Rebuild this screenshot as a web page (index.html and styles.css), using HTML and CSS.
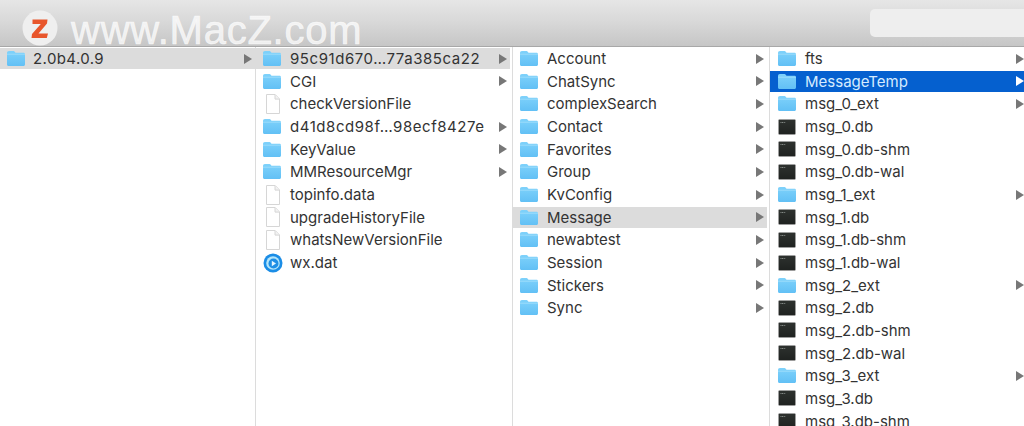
FILE: index.html
```html
<!DOCTYPE html>
<html lang="en">
<head>
<meta charset="utf-8">
<title>Finder</title>
<link rel="stylesheet" href="styles.css">
</head>
<body>
<svg class="defs" width="0" height="0" aria-hidden="true">
  <defs>
    <linearGradient id="fg" x1="0" y1="0" x2="0" y2="1"><stop offset="0" stop-color="#7fd2fb"/><stop offset="1" stop-color="#62c0f5"/></linearGradient>
    <linearGradient id="tg" x1="0" y1="0" x2="0" y2="1"><stop offset="0" stop-color="#2e322f"/><stop offset="1" stop-color="#1f2220"/></linearGradient>
    <symbol id="folder" viewBox="0 0 20 17">
      <path d="M1 3.200C1 1.900 1.700 1 2.900 1h4.200c.9 0 1.300.3 1.800.9l.6.8H17.400c1 0 1.600.7 1.600 1.700v9.800c0 1-.6 1.800-1.600 1.800H2.600C1.600 16 1 15.200 1 14.200z" fill="url(#fg)"/>
      <path d="M1 4.200h18" stroke="#a7e0fb" stroke-width=".8" fill="none"/>
    </symbol>
    <symbol id="doc" viewBox="0 0 16 20">
      <path d="M1.500.5h8.700l4.300 4.400v14.600h-13z" fill="#fff" stroke="#d6d6d6"/>
      <path d="M10 .8v4.300h4.300" fill="#f2f2f2" stroke="#d6d6d6"/>
    </symbol>
    <symbol id="term" viewBox="0 0 18 16">
      <rect x=".5" y=".5" width="17" height="15" rx="1" fill="url(#tg)" stroke="#a5a5a5" stroke-width=".6"/>
      <path d="M2.500 3.500h5" stroke="#8d938f" stroke-width="1" stroke-dasharray="1 .6"/>
    </symbol>
    <symbol id="wx" viewBox="0 0 20 20">
      <circle cx="10" cy="10" r="9.500" fill="#1b8de6"/>
      <circle cx="10" cy="10" r="6.800" fill="#b4e6fa"/>
      <circle cx="10.500" cy="10.500" r="5" fill="#1f8fe6"/>
      <path d="M8.800 7.800l4.200 2.700-4.200 2.700z" fill="#e6f7ff"/>
    </symbol>
    <symbol id="arrow" viewBox="0 0 8 10"><path d="M0 0l8 5-8 5z"/></symbol>
  </defs>
</svg>
<div class="window">
  <header class="toolbar">
    <svg class="logo" viewBox="0 0 36 36" aria-hidden="true">
      <circle cx="18" cy="18" r="17.500" fill="#efefef"/>
      <path d="M10.500 9.500H25.500L25 13.500 16.500 23.500H26L24.800 28H9.500L10 24 18.800 14H10.500z" fill="#e8562c"/>
    </svg>
    <span class="watermark">www.MacZ.com</span>
    <div class="search"></div>
  </header>
  <main class="browser">
    <section class="col col-1">
      <div class="row path"><svg class="ic folder"><use href="#folder"/></svg><span class="name num">2.0b4.0.9</span><svg class="chev"><use href="#arrow"/></svg></div>
    </section>
    <section class="col col-2">
      <div class="row path"><svg class="ic folder"><use href="#folder"/></svg><span class="name hash">95c91d670…77a385ca22</span><svg class="chev"><use href="#arrow"/></svg></div>
      <div class="row"><svg class="ic folder"><use href="#folder"/></svg><span class="name">CGI</span><svg class="chev"><use href="#arrow"/></svg></div>
      <div class="row"><svg class="ic doc"><use href="#doc"/></svg><span class="name">checkVersionFile</span></div>
      <div class="row"><svg class="ic folder"><use href="#folder"/></svg><span class="name hash">d41d8cd98f…98ecf8427e</span><svg class="chev"><use href="#arrow"/></svg></div>
      <div class="row"><svg class="ic folder"><use href="#folder"/></svg><span class="name">KeyValue</span><svg class="chev"><use href="#arrow"/></svg></div>
      <div class="row"><svg class="ic folder"><use href="#folder"/></svg><span class="name">MMResourceMgr</span><svg class="chev"><use href="#arrow"/></svg></div>
      <div class="row"><svg class="ic doc"><use href="#doc"/></svg><span class="name">topinfo.data</span></div>
      <div class="row"><svg class="ic doc"><use href="#doc"/></svg><span class="name">upgradeHistoryFile</span></div>
      <div class="row"><svg class="ic doc"><use href="#doc"/></svg><span class="name">whatsNewVersionFile</span></div>
      <div class="row"><svg class="ic wx"><use href="#wx"/></svg><span class="name">wx.dat</span></div>
    </section>
    <section class="col col-3">
      <div class="row"><svg class="ic folder"><use href="#folder"/></svg><span class="name">Account</span><svg class="chev"><use href="#arrow"/></svg></div>
      <div class="row"><svg class="ic folder"><use href="#folder"/></svg><span class="name">ChatSync</span><svg class="chev"><use href="#arrow"/></svg></div>
      <div class="row"><svg class="ic folder"><use href="#folder"/></svg><span class="name">complexSearch</span><svg class="chev"><use href="#arrow"/></svg></div>
      <div class="row"><svg class="ic folder"><use href="#folder"/></svg><span class="name">Contact</span><svg class="chev"><use href="#arrow"/></svg></div>
      <div class="row"><svg class="ic folder"><use href="#folder"/></svg><span class="name">Favorites</span><svg class="chev"><use href="#arrow"/></svg></div>
      <div class="row"><svg class="ic folder"><use href="#folder"/></svg><span class="name">Group</span><svg class="chev"><use href="#arrow"/></svg></div>
      <div class="row"><svg class="ic folder"><use href="#folder"/></svg><span class="name">KvConfig</span><svg class="chev"><use href="#arrow"/></svg></div>
      <div class="row path"><svg class="ic folder"><use href="#folder"/></svg><span class="name">Message</span><svg class="chev"><use href="#arrow"/></svg></div>
      <div class="row"><svg class="ic folder"><use href="#folder"/></svg><span class="name">newabtest</span><svg class="chev"><use href="#arrow"/></svg></div>
      <div class="row"><svg class="ic folder"><use href="#folder"/></svg><span class="name">Session</span><svg class="chev"><use href="#arrow"/></svg></div>
      <div class="row"><svg class="ic folder"><use href="#folder"/></svg><span class="name">Stickers</span><svg class="chev"><use href="#arrow"/></svg></div>
      <div class="row"><svg class="ic folder"><use href="#folder"/></svg><span class="name">Sync</span><svg class="chev"><use href="#arrow"/></svg></div>
    </section>
    <section class="col col-4">
      <div class="row"><svg class="ic folder"><use href="#folder"/></svg><span class="name">fts</span><svg class="chev"><use href="#arrow"/></svg></div>
      <div class="row selected"><svg class="ic folder"><use href="#folder"/></svg><span class="name">MessageTemp</span><svg class="chev"><use href="#arrow"/></svg></div>
      <div class="row"><svg class="ic folder"><use href="#folder"/></svg><span class="name">msg_0_ext</span><svg class="chev"><use href="#arrow"/></svg></div>
      <div class="row"><svg class="ic term"><use href="#term"/></svg><span class="name">msg_0.db</span></div>
      <div class="row"><svg class="ic term"><use href="#term"/></svg><span class="name">msg_0.db-shm</span></div>
      <div class="row"><svg class="ic term"><use href="#term"/></svg><span class="name">msg_0.db-wal</span></div>
      <div class="row"><svg class="ic folder"><use href="#folder"/></svg><span class="name">msg_1_ext</span><svg class="chev"><use href="#arrow"/></svg></div>
      <div class="row"><svg class="ic term"><use href="#term"/></svg><span class="name">msg_1.db</span></div>
      <div class="row"><svg class="ic term"><use href="#term"/></svg><span class="name">msg_1.db-shm</span></div>
      <div class="row"><svg class="ic term"><use href="#term"/></svg><span class="name">msg_1.db-wal</span></div>
      <div class="row"><svg class="ic folder"><use href="#folder"/></svg><span class="name">msg_2_ext</span><svg class="chev"><use href="#arrow"/></svg></div>
      <div class="row"><svg class="ic term"><use href="#term"/></svg><span class="name">msg_2.db</span></div>
      <div class="row"><svg class="ic term"><use href="#term"/></svg><span class="name">msg_2.db-shm</span></div>
      <div class="row"><svg class="ic term"><use href="#term"/></svg><span class="name">msg_2.db-wal</span></div>
      <div class="row"><svg class="ic folder"><use href="#folder"/></svg><span class="name">msg_3_ext</span><svg class="chev"><use href="#arrow"/></svg></div>
      <div class="row"><svg class="ic term"><use href="#term"/></svg><span class="name">msg_3.db</span></div>
      <div class="row"><svg class="ic term"><use href="#term"/></svg><span class="name">msg_3.db-shm</span></div>
    </section>
  </main>
</div>
</body>
</html>
```
FILE: styles.css
```css
html, body {
  margin: 0;
  padding: 0;
  height: 426px;
  overflow: hidden;
  background: #fff;
}
.defs { position: absolute; }
.window {
  display: flex;
  flex-direction: column;
  width: 1024px;
  height: 426px;
  font-family: Inter, "Liberation Sans", Arial, sans-serif;
  color: #333;
}
.toolbar {
  display: flex;
  align-items: flex-start;
  flex: 0 0 47px;
  min-height: 0;
  box-sizing: border-box;
  padding: 0 0 0 22px;
  background: linear-gradient(#e6e6e6, #d9d9d9 45%, #c6c6c6);
  border-bottom: 1px solid #a8a8a8;
}
.logo { width: 36px; height: 36px; margin-top: 10px; flex: none; }
.watermark {
  margin: 14px 0 0 13px;
  font-family: "Liberation Sans", Arial, sans-serif;
  font-size: 40px;
  line-height: 32px;
  letter-spacing: .75px;
  color: rgba(255, 255, 255, .72);
  -webkit-text-stroke: .6px rgba(255, 255, 255, .72);
}
.search {
  margin: 9px 0 0 auto;
  width: 154px;
  height: 28px;
  background: #eeeeee;
  border-radius: 5px 0 0 5px;
}
.browser {
  display: grid;
  grid-template-columns: 255px 257px 257px 255px;
  flex: 1;
  min-height: 0;
  overflow: hidden;
}
.col {
  box-sizing: border-box;
  padding-top: 1px;
  border-left: 1px solid #dcdcdc;
  min-width: 0;
  display: grid;
  grid-auto-rows: 21.2px;
  row-gap: 1.47px;
  align-content: start;
}
.col-1 { border-left: 0; }
.col-2, .col-3 { padding-right: 2px; }
.row {
  display: flex;
  align-items: center;
  position: relative;
  font-size: 15px;
  white-space: nowrap;
}
.row .ic { flex: none; }
.name { position: absolute; left: 34px; }
.col-1 .name { left: 33px; }
.col-4 .name { left: 35px; }
.num { letter-spacing: .4px; }
.hash { letter-spacing: .55px; }
.ic.folder { width: 20px; height: 17px; margin-left: 6px; }
.ic.doc { width: 16px; height: 20px; margin-left: 9px; }
.ic.term { width: 18px; height: 16px; margin-left: 7px; }
.ic.wx { width: 20px; height: 20px; margin-left: 7px; }
.col-4 .ic.folder { margin-left: 7px; }
.col-4 .ic.term { margin-left: 8px; }
.chev {
  width: 8px;
  height: 10px;
  margin-left: auto;
  margin-right: 3px;
  fill: #777;
}
.col-4 .chev { margin-right: 0; }
.path { background: #dcdcdc; }
.selected { background: #0560cf; color: #fff; }
.selected .chev { fill: #fff; }
.selected .name { color: #d5ecff; }
```
